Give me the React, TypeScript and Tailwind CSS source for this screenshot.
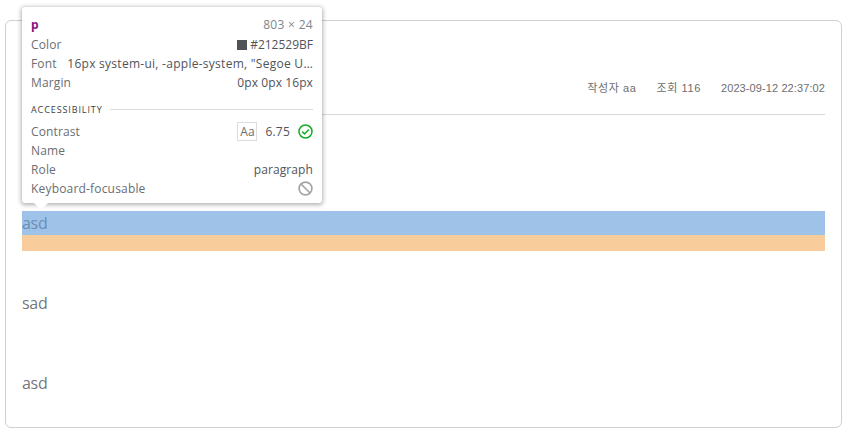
import React from 'react';

const rowClass = 'flex items-center justify-between h-[19px]';

function Tooltip() {
  return (
    <div className="absolute left-[22px] top-[7px] w-[300px] h-[196px] bg-white rounded-[3px] shadow-[0_1px_4px_1px_rgba(0,0,0,0.3)] px-[9px] pt-[7px] text-[12px] leading-[19px] text-[#6a6e72] font-['Open_Sans',sans-serif]">
      <div className="flex items-center justify-between h-[21px]">
        <span className="font-bold text-[#881280]">p</span>
        <span className="text-[#80868b] tracking-[0.3px]">803 × 24</span>
      </div>
      <div className={rowClass}>
        <span className="tracking-[0.13px]">Color</span>
        <span className="flex items-center text-[#50545a]">
          <span className="w-[10px] h-[10px] bg-[#4f5358] mr-[3px]" />
          #212529BF
        </span>
      </div>
      <div className={rowClass}>
        <span className="tracking-[0.13px]">Font</span>
        <span className="text-[#50545a] whitespace-nowrap tracking-[0.27px]">16px system-ui, -apple-system, "Segoe U…</span>
      </div>
      <div className={rowClass}>
        <span className="tracking-[0.13px]">Margin</span>
        <span className="text-[#50545a] tracking-[0.1px]">0px 0px 16px</span>
      </div>
      <div className="flex items-center mt-[8px] mb-[3px] h-[19px]">
        <span className="text-[9px] tracking-[0.9px] text-[#3c4043] mr-[7px]">ACCESSIBILITY</span>
        <span className="flex-1 h-px bg-[#dadce0]" />
      </div>
      <div className={rowClass}>
        <span className="tracking-[0.13px]">Contrast</span>
        <span className="flex items-center text-[#50545a]">
          <span className="w-[20px] h-[19px] border border-[#dadce0] flex items-center justify-center text-[#6a6e72] mr-[8px]">Aa</span>
          <span className="tracking-[0.2px]">6.75</span>
          <svg className="ml-[8px]" width="15" height="15" viewBox="0 0 15 15" fill="none" stroke="#14ad26" strokeWidth="1.5">
            <circle cx="7.5" cy="7.5" r="6.5" />
            <path d="M4.2 7.6 6.6 10 10.8 5.4" />
          </svg>
        </span>
      </div>
      <div className={rowClass}>
        <span className="tracking-[0.13px]">Name</span>
      </div>
      <div className={rowClass}>
        <span className="tracking-[0.13px]">Role</span>
        <span className="text-[#50545a] tracking-[0.1px]">paragraph</span>
      </div>
      <div className={rowClass}>
        <span className="tracking-[0.18px]">Keyboard-focusable</span>
        <svg width="15" height="15" viewBox="0 0 15 15" fill="none" stroke="#a3a6a9" strokeWidth="1.7">
          <circle cx="7.5" cy="7.5" r="6.4" />
          <path d="M3 3 12 12" />
        </svg>
      </div>
      {/* arrow */}
      <div className="absolute left-[11px] -bottom-[7px] w-0 h-0 border-x-[8px] border-x-transparent border-t-[8px] border-t-white" />
    </div>
  );
}

export default function App() {
  return (
    <div className="relative w-[846px] h-[443px] bg-white pt-5 px-[5px] font-['Open_Sans',sans-serif] text-[#212529a6] overflow-hidden">
      <div className="w-[837px] h-[408px] border border-[#ced0d2] rounded-md px-4">
        <div className="h-[94px] flex items-end justify-end gap-5 pb-[18px] border-b border-[#d9d9d9] text-[11px] leading-[16px] text-[#6e6e6e] font-['Liberation_Sans','Noto_Sans_CJK_KR',sans-serif]">
          <span className="tracking-[0.6px]">작성자 aa</span>
          <span className="tracking-[0.6px]">조회 116</span>
          <span className="tracking-[0.1px]">2023-09-12 22:37:02</span>
        </div>
        <div className="pt-24 tracking-[-0.3px]">
          <p className="h-6 leading-6 bg-[#9fc3e8] text-[#6b8db5]">asd</p>
          <div className="h-4 bg-[#f8cc9b]" />
          <p className="mt-10 h-6 leading-6">sad</p>
          <p className="mt-14 h-6 leading-6">asd</p>
        </div>
      </div>
      <Tooltip />
    </div>
  );
}
